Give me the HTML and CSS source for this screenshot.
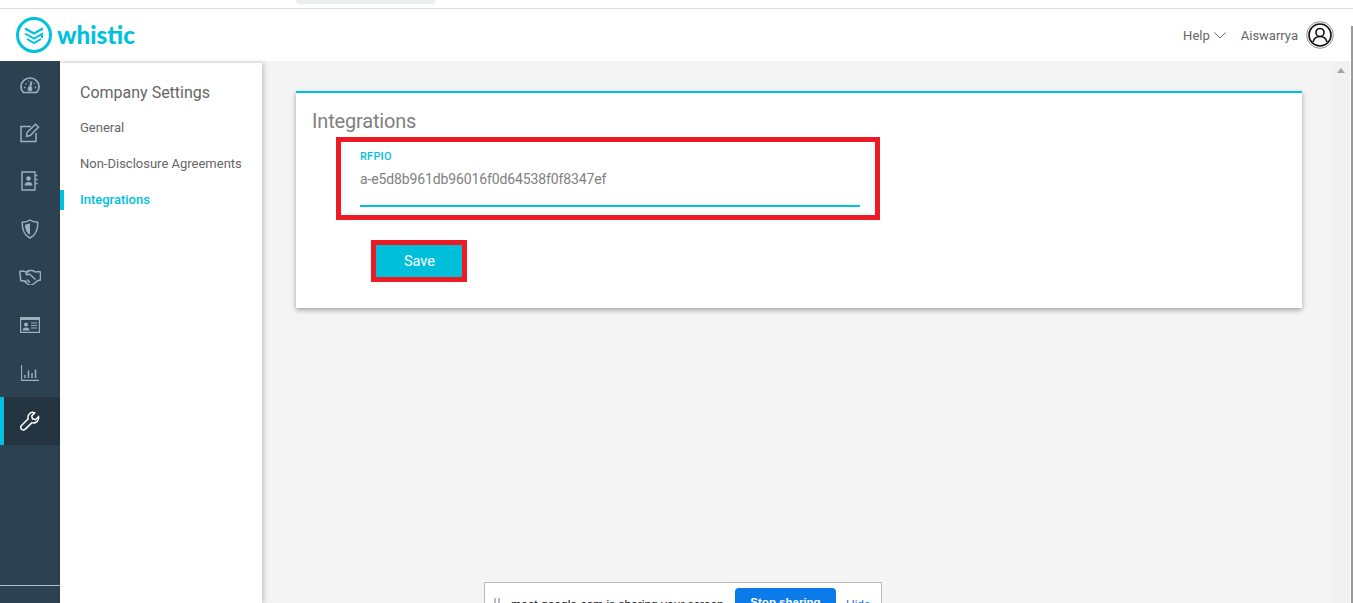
FILE: index.html
```html
<!DOCTYPE html>
<html lang="en">
<head>
<meta charset="utf-8">
<title>Whistic - Integrations</title>
<link rel="stylesheet" href="styles.css">
</head>
<body>
<div class="browser-strip"><div class="tab-pill"></div></div>
<header class="topbar">
  <div class="logo">
    <svg class="logo-mark" viewBox="0 0 36 36" width="36" height="36" fill="none" stroke="#00c1de">
      <circle cx="18" cy="18" r="16.500" stroke-width="3"/>
      <path d="M9 11.500l9 5 9-5" stroke-width="2.200"/>
      <path d="M9 16.500l9 5 8-4.500v4" stroke-width="2"/>
      <path d="M11 22l7 4.200 7-4.200" stroke-width="2"/>
    </svg>
    <span class="logo-text">whistic</span>
  </div>
  <div class="top-actions">
    <span class="help">Help
      <svg viewBox="0 0 12 7" width="12" height="7" fill="none" stroke="#666" stroke-width="1"><path d="M.5.500 6 6l5.500-5.500"/></svg>
    </span>
    <span class="user">Aiswarrya</span>
    <svg class="avatar" viewBox="0 0 28 28" width="28" height="28" fill="none" stroke="#111">
      <circle cx="14" cy="14" r="13.300" stroke="#777" stroke-width=".8"/>
      <circle cx="14" cy="14" r="11" stroke-width="1.600"/>
      <circle cx="14" cy="11.500" r="4" stroke-width="1.600"/>
      <path d="M7 21c1-4 4-5.500 7-5.500s6 1.500 7 5.500" stroke-width="1.600"/>
    </svg>
  </div>
  <div class="outer-scroll"></div>
</header>
<div class="layout">
  <nav class="rail">
    <a class="rail-item">
      <svg viewBox="0 0 20 18" width="20" height="18" fill="none" stroke="#9fb0bd" stroke-width="1.700"><path d="M3.500 16.500C1.800 15 .9 13 .9 10.800A9.100 8.800 0 0 1 19.100 10.800c0 2.200-.9 4.200-2.600 5.700z"/><path d="M10 12 11.500 5.500" stroke-width="2"/><circle cx="10" cy="13" r="1.600" fill="#9fb0bd"/><path d="M3.800 11.500h1.500M5.500 7.500l1 .8M8.300 5.200h.8M14.700 11.500h1.500M14 7.500l.8-.6" stroke-width="1.300"/></svg>
    </a>
    <a class="rail-item">
      <svg viewBox="0 0 20 20" width="20" height="20" fill="none" stroke="#9fb0bd" stroke-width="1.500"><path d="M11 3.500H1v15h15V10"/><path d="M7 9.500 15.500 1.200l3 2.800L10.200 12.500 6.500 13.200z"/></svg>
    </a>
    <a class="rail-item">
      <svg viewBox="0 0 18 20" width="18" height="20" fill="none" stroke="#9fb0bd" stroke-width="1.400"><path d="M1 1h13v18H1z"/><path d="M14.500 4.500h2M14.500 8.500h2M14.500 12.500h2"/><circle cx="7.500" cy="7.500" r="2.200" fill="#9fb0bd" stroke="none"/><path d="M3.500 14.500c0-2.500 2-3.500 4-3.500s4 1 4 3.500z" fill="#9fb0bd" stroke="none"/></svg>
    </a>
    <a class="rail-item">
      <svg viewBox="0 0 18 20" width="18" height="20" fill="none" stroke="#9fb0bd" stroke-width="1.400"><path d="M9 1C7 2.500 4 3.200 1.200 3.200 1 10 3 16 9 19c6-3 8-9 7.800-15.800C14 3.200 11 2.500 9 1z"/><path d="M9 4C7.500 5 6 5.400 4 5.600 4 10 5.500 14 9 16z" fill="#9fb0bd" stroke="none"/></svg>
    </a>
    <a class="rail-item">
      <svg viewBox="0 0 22 16" width="22" height="16" fill="none" stroke="#9fb0bd" stroke-width="1.500"><path d="M.8 2.500 4 2l3 1 3-1.500h3.500l3 1.500 3-.5 2 .5v8l-2.500.5-6 4.500c-1 .5-2 .5-3 0l-5-4-3.200-.5z"/><path d="M10 1.500 7 5c1 1.200 2.500 1 3.500 0l6 5.500M5.500 11.500l2 1.500M8 10.500l3 3"/></svg>
    </a>
    <a class="rail-item">
      <svg viewBox="0 0 20 16" width="20" height="16"><path fill="#9fb0bd" fill-rule="evenodd" d="M0 0h20v16H0zM1.200 3v11.800h17.600V3z"/><circle cx="6" cy="7.500" r="2" fill="#9fb0bd"/><path d="M2.500 13.500c0-2 1.500-3 3.500-3s3.500 1 3.500 3z" fill="#9fb0bd"/><path d="M11 6h6M11 8.500h6M11 11h6" stroke="#9fb0bd" stroke-width="1.200"/></svg>
    </a>
    <a class="rail-item">
      <svg viewBox="0 0 18 16" width="18" height="16" fill="none" stroke="#9fb0bd"><path d="M.5 0v15.300H18" stroke-width="1.200"/><path d="M4 13V10M7.500 13V5.500M11 13V8M14.500 13V4.500" stroke-width="1.500"/></svg>
    </a>
    <a class="rail-item rail-active">
      <svg viewBox="0 0 20 20" width="20" height="20" fill="none" stroke="#fff" stroke-width="1.500"><path d="M12.500 1.300a5 5 0 0 0-4.300 6.600L1.500 14.500a2.400 2.400 0 0 0 3.800 3.600l6.700-6.500a5 5 0 0 0 6.500-5.800l-3 2.900-3-.9-.8-2.800 3-3a5 5 0 0 0-2.200-.7z"/></svg>
    </a>
    <div class="rail-rule"></div>
  </nav>
  <aside class="subnav">
    <h2 class="subnav-title">Company Settings</h2>
    <a class="subnav-link">General</a>
    <a class="subnav-link">Non-Disclosure Agreements</a>
    <a class="subnav-link subnav-active">Integrations</a>
  </aside>
  <main class="content">
    <section class="card">
      <h1 class="card-title">Integrations</h1>
      <div class="field-mark">
        <label class="field-label">RFPIO</label>
        <div class="field-value">a-e5d8b961db96016f0d64538f0f8347ef</div>
      </div>
      <div class="save-mark"><button class="save">Save</button></div>
    </section>
    <div class="share-bar">
      <span class="grip"></span>
      <span class="share-text">meet.google.com is sharing your screen.</span>
      <span class="stop">Stop sharing</span>
      <span class="hide">Hide</span>
    </div>
  </main>
  <div class="scrolltrack"><span class="scroll-up"></span></div>
  <div class="outer-track"></div>
</div>
</body>
</html>
```
FILE: styles.css
```css
* { box-sizing: border-box; }
html, body { margin: 0; height: 603px; overflow: hidden; }
body { font-family: Roboto, "Liberation Sans", Arial, sans-serif; color: #666; background: #fff; display: flex; flex-direction: column; }

.browser-strip { height: 9px; flex: none; background: #fff; border-bottom: 1px solid #dcdcdc; overflow: hidden; display: flex; padding-left: 296px; }
.tab-pill { width: 140px; height: 4px; background: #ebeeee; border-radius: 0 0 12px 12px; }

.topbar { height: 52px; flex: none; background: #fff; display: flex; align-items: center; position: relative; padding: 0 19px 0 16px; }
.logo { display: flex; align-items: center; gap: 5px; }
.logo-mark { display: block; }
.logo-text { font-family: "Lato", sans-serif; font-weight: 900; font-size: 24.200px; color: #00c1de; line-height: 36px; }
.top-actions { margin-left: auto; display: flex; align-items: center; font-size: 13px; color: #666; }
.help { display: flex; align-items: center; gap: 4px; margin-right: 15px; }
.user { margin-right: 8px; }
.avatar { display: block; }
.outer-scroll { position: absolute; right: 0; top: 17px; bottom: 0; width: 2px; background: #9a9a9a; }

.layout { flex: 1; display: flex; min-height: 0; background: #f4f4f4; }

.rail { width: 60px; flex: none; background: #2c4251; position: relative; display: flex; flex-direction: column; }
.rail-item { height: 48px; flex: none; display: flex; align-items: center; justify-content: center; }
.rail-active { background: #243541; border-left: 4px solid #00c1de; padding-right: 4px; }
.rail-rule { position: absolute; left: 0; right: 0; bottom: 17px; height: 1px; background: #aebdc8; }

.subnav { width: 202px; flex: none; background: #fff; box-shadow: 2px 0 5px rgba(0,0,0,.2); margin-top: 2px; padding: 20px 0 0; position: relative; }
.subnav-title { margin: 0 0 15px 20px; font-size: 16px; font-weight: 400; line-height: 20px; color: #666; }
.subnav-link { display: block; height: 20px; line-height: 20px; padding-left: 20px; margin-bottom: 16px; font-size: 13px; color: #666; }
.subnav-active { color: #00c1de; font-weight: 500; border-left: 4px solid #00c1de; padding-left: 16px; }

.content { flex: 1; min-width: 0; padding: 30px 30px 0 34px; position: relative; }
.card { height: 217px; background: #fff; border-top: 2px solid #00c1de; box-shadow: 0 2px 5px rgba(0,0,0,.35); padding: 16px 0 0 16px; }
.card-title { margin: 0; font-size: 20px; font-weight: 400; line-height: 25px; letter-spacing: -.17px; color: #808080; }
.field-mark { margin: 3px 0 0 24px; width: 544px; height: 83px; border: 5px solid #ed1c24; padding: 10px 19px 0; }
.field-label { display: block; font-size: 11px; font-weight: 500; line-height: 10px; letter-spacing: .2px; color: #00c1de; }
.field-value { width: 500px; height: 39px; margin-top: 6px; padding-top: 2px; font-size: 14px; line-height: 18px; letter-spacing: -.12px; color: #808080; border-bottom: 2px solid #00c1de; }
.save-mark { margin: 20px 0 0 59px; width: 96px; height: 42px; border: 5px solid #ed1c24; }
.save { display: block; width: 86px; height: 32px; border: 0; padding: 0 0 0 1px; background: #00bfda; color: #fff; font: 400 14.500px Roboto, "Liberation Sans", sans-serif; }

.share-bar { position: absolute; left: 222px; top: 521px; width: 398px; height: 40px; background: #fff; border: 1px solid #bbb; display: flex; align-items: flex-start; padding: 5px 0 0 9px; font-size: 12px; color: #111; font-family: "Liberation Sans", sans-serif; }
.grip { width: 6px; height: 12px; margin-top: 10px; border-left: 2px solid #bbb; border-right: 2px solid #bbb; flex: none; }
.share-text { margin-left: 11px; margin-top: 10px; white-space: nowrap; width: 224px; }
.stop { width: 101px; height: 30px; background: #0b7bea; color: #fff; font-weight: 700; border-radius: 4px; text-align: center; padding-top: 4px; line-height: 20px; flex: none; font-size: 11.500px; }
.hide { margin-left: 10px; margin-top: 10px; color: #1a73e8; }

.scrolltrack { width: 18px; flex: none; background: #f1f1f1; display: flex; justify-content: center; padding-top: 7px; }
.scroll-up { width: 0; height: 0; border: 4px solid transparent; border-top: 0; border-bottom: 5px solid #a3a3a3; }
.outer-track { width: 3px; flex: none; background: linear-gradient(to right, #fff 1px, #9a9a9a 1px); }
```
